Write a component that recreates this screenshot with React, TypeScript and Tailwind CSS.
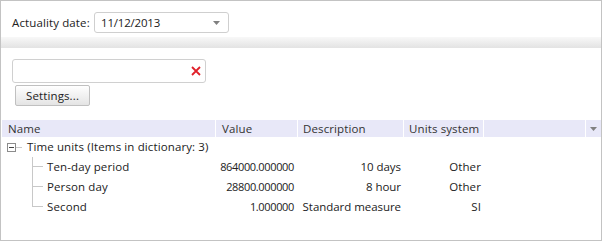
import React from "react";

const rows = [
  { name: "Ten-day period", value: "864000.000000", desc: "10 days", units: "Other" },
  { name: "Person day", value: "28800.000000", desc: "8 hour", units: "Other" },
  { name: "Second", value: "1.000000", desc: "Standard measure", units: "SI" },
];

function Caret() {
  return (
    <svg width="7" height="4" viewBox="0 0 7 4">
      <path d="M0 0 H7 L3.5 4 Z" fill="#808080" />
    </svg>
  );
}

export default function App() {
  return (
    <div className="w-[602px] h-[241px] border border-[#c3c3c3] flex flex-col bg-white font-['Open_Sans',sans-serif] text-[11.5px] tracking-[0.12px] text-[#222] overflow-hidden">
      {/* toolbar */}
      <div className="h-[36px] flex items-start pt-[11px] pl-[11px] shrink-0">
        <span className="w-[82px] h-[21px] leading-[21px]">Actuality date:</span>
        <div className="w-[135px] h-[21px] border border-[#cfcfcf] rounded-[3px] flex items-center justify-between pl-[6px] pr-[8px]">
          <span className="leading-[19px] tracking-[-0.2px]">11/12/2013</span>
          <Caret />
        </div>
      </div>
      <div className="h-[11px] shrink-0 bg-linear-to-b from-[#f8f8f8] to-[#e3e3e3]" />
      {/* panel */}
      <div className="flex-1 flex flex-col pt-[11px]">
        <div className="ml-[11px] w-[194px] h-[24px] border border-[#d0d0d0] rounded-[3px] flex items-center justify-end pr-[4px]">
          <svg width="10" height="10" viewBox="0 0 10 10">
            <path d="M1 1 L9 9 M9 1 L1 9" stroke="#e0202a" strokeWidth="1.8" />
          </svg>
        </div>
        <div className="ml-[14px] mt-[2px] w-[75px] h-[21px] border border-[#c0c0c0] rounded-[2px] bg-linear-to-b from-white to-[#e4e4e4] flex items-center pl-[10px]">
          Settings...
        </div>
        {/* header */}
        <div className="ml-[1px] mt-[14px] w-[599px] h-[17px] flex bg-[#e8e8f8] text-[#333] leading-[17px]">
          <div className="w-[214px] border-r border-white pl-[6px]">Name</div>
          <div className="w-[82px] border-r border-white pl-[6px]">Value</div>
          <div className="w-[106px] border-r border-white pl-[5px]">Description</div>
          <div className="w-[80px] border-r border-white pl-[5px]">Units system</div>
          <div className="w-[102px] border-r border-white" />
          <div className="w-[15px] flex items-center justify-center">
            <Caret />
          </div>
        </div>
        {/* parent row */}
        <div className="ml-[1px] h-[20px] flex items-center pl-[5px]">
          <div className="w-[9px] h-[9px] border border-[#8c8c8c] flex items-center justify-center">
            <div className="w-[5px] h-px bg-[#444]" />
          </div>
          <div className="w-[6px] h-px bg-[#c8c8c8]" />
          <span className="ml-[5px] leading-[20px]">Time units (Items in dictionary: 3)</span>
        </div>
        {rows.map((r, i) => (
          <div key={r.name} className="ml-[1px] h-[20px] flex leading-[20px]">
            <div className="w-[214px] flex">
              <div className="w-[30px]" />
              <div className="w-[11px] flex flex-col">
                <div className="h-[10px] border-l border-b border-[#c8c8c8]" />
                <div className={i < rows.length - 1 ? "h-[10px] border-l border-[#c8c8c8]" : "h-[10px]"} />
              </div>
              <span className="ml-[4px]">{r.name}</span>
            </div>
            <div className="w-[82px] text-right pr-[4px] text-[11px] tracking-[-0.35px]">{r.value}</div>
            <div className="w-[106px] text-right pr-[3px] tracking-[-0.05px]">{r.desc}</div>
            <div className="w-[80px] text-right pr-[3px]">{r.units}</div>
          </div>
        ))}
      </div>
    </div>
  );
}
